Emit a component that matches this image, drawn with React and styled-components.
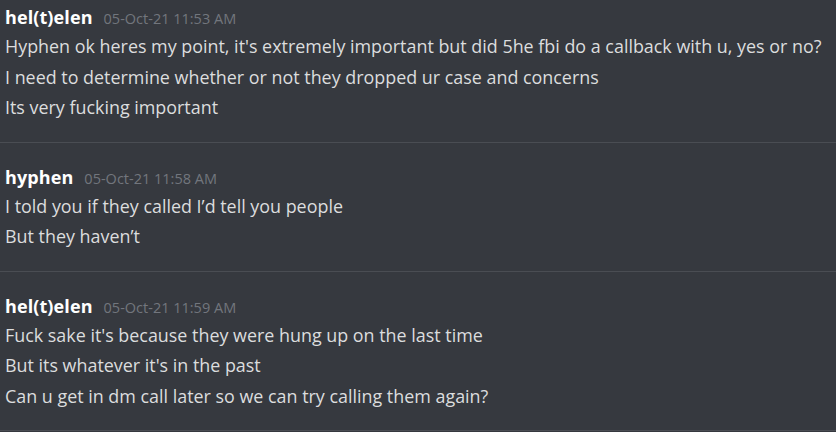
import React from 'react'
import styled, { createGlobalStyle } from 'styled-components';

const GlobalStyle = createGlobalStyle`
    html, body {
        margin: 0;
        padding: 0;
        background-color: #36393f;
        overflow: hidden;
    }
    body {
        font-family: "Open Sans", "Noto Sans", sans-serif;
    }
`;

const Chat = styled.div`
    width: 836px;
    height: 432px;
    overflow: hidden;
    background-color: #36393f;
`;

const List = styled.div`
    margin-top: -17px;
    display: flex;
    flex-direction: column;
`;

const Message = styled.div`
    padding: 22px 5px 19px 5px;
    border-bottom: 1px solid #4a4d53;
`;

const Header = styled.div`
    display: flex;
    align-items: baseline;
    height: 24px;
    line-height: 24px;
    margin-bottom: 2px;
`;

const Author = styled.span`
    color: #ffffff;
    font-size: 18px;
    font-weight: 700;
    letter-spacing: 0.1px;
`;

const Timestamp = styled.span`
    color: #72767d;
    font-size: 14.5px;
    margin-left: 11px;
`;

const Line = styled.div`
    color: #dcddde;
    font-size: 17.9px;
    line-height: 30.5px;
    white-space: nowrap;
`;

const messages = [
    {
        author: 'hel(t)elen',
        time: '05-Oct-21 11:53 AM',
        lines: [
            "Hyphen ok heres my point, it's extremely important but did 5he fbi do a callback with u, yes or no?",
            'I need to determine whether or not they dropped ur case and concerns',
            'Its very fucking important',
        ],
    },
    {
        author: 'hyphen',
        time: '05-Oct-21 11:58 AM',
        lines: [
            'I told you if they called I’d tell you people',
            'But they haven’t',
        ],
    },
    {
        author: 'hel(t)elen',
        time: '05-Oct-21 11:59 AM',
        lines: [
            "Fuck sake it's because they were hung up on the last time",
            "But its whatever it's in the past",
            'Can u get in dm call later so we can try calling them again?',
        ],
    },
];

const App = () => {
    return (
        <Chat>
            <GlobalStyle />
            <List>
                {messages.map((m, i) => (
                    <Message key={i}>
                        <Header>
                            <Author>{m.author}</Author>
                            <Timestamp>{m.time}</Timestamp>
                        </Header>
                        {m.lines.map((l, j) => (
                            <Line key={j}>{l}</Line>
                        ))}
                    </Message>
                ))}
            </List>
        </Chat>
    )
}

export default App
